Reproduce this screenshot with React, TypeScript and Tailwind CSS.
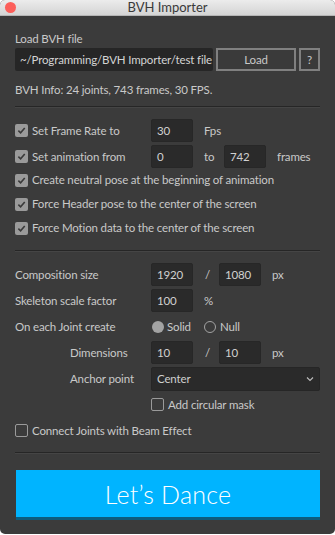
import React from "react";

const font = { fontFamily: "Lato, 'Open Sans', sans-serif" };

function Check({ on = true }: { on?: boolean }) {
  if (!on) {
    return <span className="w-[13px] h-[13px] shrink-0 rounded-[2px] border-[1.5px] border-[#9a9a9a]" />;
  }
  return (
    <span className="w-[13px] h-[13px] shrink-0 rounded-[2px] bg-[#9a9a9a] flex items-center justify-center">
      <svg width="9" height="9" viewBox="0 0 10 10">
        <path d="M1.5 5.2 L4 7.6 L8.6 2.2" stroke="#3a3a3a" strokeWidth="1.8" fill="none" />
      </svg>
    </span>
  );
}

function Field({ value, w = "w-[42px]" }: { value: string; w?: string }) {
  return (
    <div className={`${w} h-[23px] bg-[#2a2a2a] border border-[#272727] rounded-[2px] flex items-center pl-[5px] text-[#d0d0d0] shrink-0`}>
      {value}
    </div>
  );
}

function Divider({ className }: { className: string }) {
  return <div className={`h-[1px] bg-[#262626] border-b border-[#454545] box-content ${className}`} />;
}

export default function App() {
  return (
    <div className="w-[335px] h-[535px] bg-white" style={font}>
      <div className="w-[335px] h-[534px] bg-[#3b3b3b] rounded-[5px] overflow-hidden flex flex-col text-[11.5px] tracking-[-0.15px] leading-[14px] text-[#c9c9c9]">
        {/* title bar */}
        <div className="h-[16px] shrink-0 bg-gradient-to-b from-[#ececec] to-[#d4d4d4] relative flex items-center justify-center border-b border-[#b5b5b5]">
          <span className="absolute left-[5px] top-[2px] w-[11px] h-[11px] rounded-full bg-[#fc5f5a]" />
          <span className="text-[13px] leading-[15px] tracking-normal text-[#3a3a3a]">BVH Importer</span>
        </div>

        <div className="px-[15px] flex flex-col">
          <div className="mt-[16px] h-[14px]">Load BVH file</div>
          <div className="mt-[2px] flex gap-[3px]">
            <div className="w-[198px] h-[23px] bg-[#262626] rounded-[2px] flex items-center pl-[5px] text-[#d4d4d4] whitespace-nowrap overflow-hidden">
              ~/Programming/BVH Importer/test file
            </div>
            <div className="w-[80px] h-[23px] border-2 border-[#808080] bg-[#3a3a3a] flex items-center justify-center">Load</div>
            <div className="w-[21px] h-[23px] border-2 border-[#808080] bg-[#3a3a3a] flex items-center justify-center">?</div>
          </div>
          <div className="mt-[12px] h-[14px]">BVH Info: 24 joints, 743 frames, 30 FPS.</div>

          <Divider className="mt-[9px]" />

          <div className="mt-[11px] flex flex-col">
            <div className="h-[23px] flex items-center">
              <Check />
              <span className="ml-[4px] w-[119px]">Set Frame Rate to</span>
              <Field value="30" />
              <span className="ml-[11px]">Fps</span>
            </div>
            <div className="mt-[3px] h-[23px] flex items-center">
              <Check />
              <span className="ml-[4px] w-[119px]">Set animation from</span>
              <Field value="0" />
              <span className="ml-[11px] w-[20px]">to</span>
              <Field value="742" />
              <span className="ml-[11px]">frames</span>
            </div>
            <div className="h-[24px] flex items-center">
              <Check />
              <span className="ml-[4px]">Create neutral pose at the beginning of animation</span>
            </div>
            <div className="h-[24px] flex items-center">
              <Check />
              <span className="ml-[4px]">Force Header pose to the center of the screen</span>
            </div>
            <div className="h-[24px] flex items-center">
              <Check />
              <span className="ml-[4px]">Force Motion data to the center of the screen</span>
            </div>
          </div>

          <Divider className="mt-[10px]" />

          <div className="mt-[11px] flex flex-col gap-[3px]">
            <div className="h-[23px] flex items-center">
              <span className="w-[136px]">Composition size</span>
              <Field value="1920" />
              <span className="ml-[12px] w-[14px]">/</span>
              <Field value="1080" />
              <span className="ml-[11px]">px</span>
            </div>
            <div className="h-[23px] flex items-center">
              <span className="w-[136px]">Skeleton scale factor</span>
              <Field value="100" />
              <span className="ml-[11px]">%</span>
            </div>
            <div className="h-[23px] flex items-center">
              <span className="w-[137px]">On each Joint create</span>
              <span className="w-[12px] h-[12px] rounded-full bg-[#a3a3a3]" />
              <span className="ml-[3px] w-[37px]">Solid</span>
              <span className="w-[12px] h-[12px] rounded-full border-[1.5px] border-[#a3a3a3]" />
              <span className="ml-[4px]">Null</span>
            </div>
            <div className="h-[23px] flex items-center">
              <span className="ml-[55px] w-[81px]">Dimensions</span>
              <Field value="10" />
              <span className="ml-[12px] w-[14px]">/</span>
              <Field value="10" />
              <span className="ml-[11px]">px</span>
            </div>
            <div className="h-[23px] flex items-center">
              <span className="ml-[55px] w-[81px]">Anchor point</span>
              <div className="w-[169px] h-[24px] bg-[#2a2a2a] border border-[#262626] rounded-[2px] flex items-center justify-between pl-[5px] pr-[5px] text-[#d0d0d0]">
                <span>Center</span>
                <svg width="8" height="6" viewBox="0 0 8 6">
                  <path d="M1 1.5 L4 4.5 L7 1.5" stroke="#bdbdbd" strokeWidth="1.1" fill="none" />
                </svg>
              </div>
            </div>
            <div className="h-[23px] flex items-center">
              <span className="ml-[136px]" />
              <Check on={false} />
              <span className="ml-[4px]">Add circular mask</span>
            </div>
            <div className="h-[23px] flex items-center">
              <Check on={false} />
              <span className="ml-[4px]">Connect Joints with Beam Effect</span>
            </div>
          </div>

          <Divider className="mt-[10px]" />

          <div className="mt-[16px] ml-[1px] h-[50px] bg-[#00b4ff] border-b-[3px] border-[#0d5c7d] flex items-center justify-center">
            <span className="text-[25px] leading-[30px] font-light text-white tracking-[0.2px]">Let’s Dance</span>
          </div>
        </div>
      </div>
    </div>
  );
}
